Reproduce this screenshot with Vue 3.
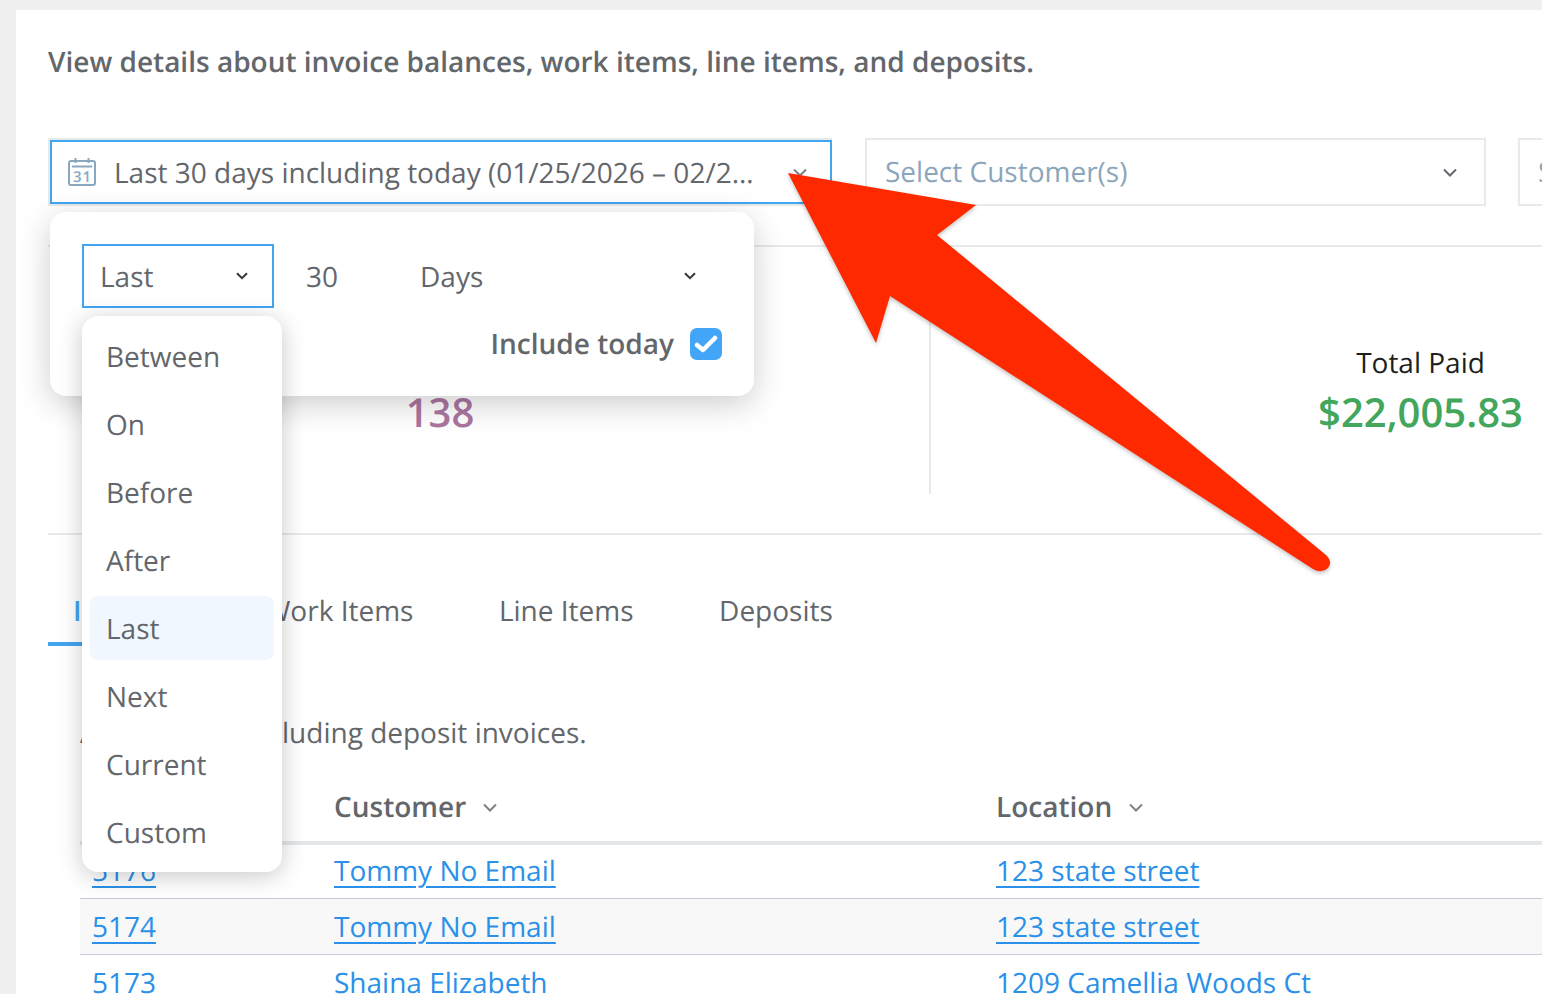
<script setup>
const menuItems = ['Between', 'On', 'Before', 'After', 'Last', 'Next', 'Current', 'Custom']
const tabs = ['Invoices', 'Work Items', 'Line Items', 'Deposits']
const rows = [
  { id: '5176', customer: 'Tommy No Email', location: '123 state street' },
  { id: '5174', customer: 'Tommy No Email', location: '123 state street' },
  { id: '5173', customer: 'Shaina Elizabeth', location: '1209 Camellia Woods Ct' },
]
</script>

<template>
  <div class="page">
    <main class="card">
      <p class="intro">View details about invoice balances, work items, line items, and deposits.</p>

      <div class="filters">
        <div class="field field-date">
          <svg class="cal" width="28" height="28" viewBox="0 0 28 28" fill="none" stroke="#8aa7c0" stroke-width="2">
            <rect x="1" y="3" width="26" height="24" rx="2" />
            <path d="M4 8.5H24M7.5 0V5M20.5 0V5" />
            <text class="cal-num" x="14.5" y="23.5" text-anchor="middle">31</text>
          </svg>
          <span class="date-text">Last 30 days including today (01/25/2026 – 02/23/2026)</span>
          <svg class="chev" width="14" height="9" viewBox="0 0 14 9" fill="none" stroke="#7d8185" stroke-width="2"><path d="M1 1.5L7 7.5L13 1.5" /></svg>
        </div>
        <div class="field field-customer">
          <span class="placeholder">Select Customer(s)</span>
          <svg class="chev" width="14" height="9" viewBox="0 0 14 9" fill="none" stroke="#63676b" stroke-width="2"><path d="M1 1.5L7 7.5L13 1.5" /></svg>
        </div>
        <div class="field field-third">
          <span class="placeholder">Select</span>
        </div>
      </div>

      <section class="stats">
        <div class="stat stat-first">
          <div class="stat-label">Total Invoices</div>
          <div class="stat-value purple">138</div>
        </div>
        <div class="stat stat-second">
          <div class="stat-label">Total Paid</div>
          <div class="stat-value green">$22,005.83</div>
        </div>
      </section>

      <nav class="tabs">
        <div v-for="(tab, i) in tabs" :key="tab" class="tab" :class="{ active: i === 0 }">{{ tab }}</div>
      </nav>

      <p class="desc">All invoices, excluding deposit invoices.</p>

      <div class="table">
        <div class="thead">
          <div class="th th-first">Invoice #</div>
          <div class="th">Customer
            <svg width="14" height="9" viewBox="0 0 14 9" fill="none" stroke="#7d8185" stroke-width="2"><path d="M1 1.5L7 7.5L13 1.5" /></svg>
          </div>
          <div class="th">Location
            <svg width="14" height="9" viewBox="0 0 14 9" fill="none" stroke="#7d8185" stroke-width="2"><path d="M1 1.5L7 7.5L13 1.5" /></svg>
          </div>
        </div>
        <div v-for="(row, i) in rows" :key="row.id" class="tr" :class="{ 'tr-first': i === 0, 'tr-alt': i === 1 }">
          <div class="td td-first"><a class="link">{{ row.id }}</a></div>
          <div class="td"><a class="link">{{ row.customer }}</a></div>
          <div class="td"><a class="link">{{ row.location }}</a></div>
        </div>
      </div>
    </main>

    <div class="popover">
      <div class="pop-row">
        <div class="pop-select">
          <span class="pop-text">Last</span>
          <svg width="12" height="8" viewBox="0 0 12 8" fill="none" stroke="#33373b" stroke-width="2"><path d="M1 1.2L6 6.2L11 1.2" /></svg>
        </div>
        <span class="pop-num pop-text">30</span>
        <div class="pop-unit">
          <span class="pop-text">Days</span>
          <svg width="12" height="8" viewBox="0 0 12 8" fill="none" stroke="#33373b" stroke-width="2"><path d="M1 1.2L6 6.2L11 1.2" /></svg>
        </div>
      </div>
      <div class="pop-today">
        <span>Include today</span>
        <span class="check">
          <svg width="24" height="20" viewBox="0 0 24 20" fill="none" stroke="#fff" stroke-width="4.5" stroke-linecap="round" stroke-linejoin="round"><path d="M3 11L9 16L21 4" /></svg>
        </span>
      </div>
    </div>

    <ul class="menu">
      <li v-for="item in menuItems" :key="item" class="menu-item" :class="{ selected: item === 'Last' }">{{ item }}</li>
    </ul>

    <svg class="arrow" width="1542" height="994" viewBox="0 0 1542 994">
      <path d="M788 173L976 205L937 235L1326 555Q1333 562 1328 568Q1322 574 1313 569L890 296L876 343Z" fill="#ff2900" />
    </svg>
  </div>
</template>

<style>
html, body { margin: 0; background: #eff0f1; }
</style>

<style scoped>
.page {
  position: relative;
  width: 1542px;
  height: 994px;
  overflow: hidden;
  padding: 10px 0 0 16px;
  box-sizing: border-box;
  background: #f0f0f1;
  font-family: "Open Sans", sans-serif;
  font-size: 28px;
  color: #63676b;
  text-rendering: geometricPrecision;
}
.card {
  width: 1526px;
  height: 984px;
  box-sizing: border-box;
  padding: 32px 0 0 32px;
  background: #fff;
  overflow: hidden;
}
.intro {
  margin: 0;
  line-height: 40px;
  font-weight: 600;
  white-space: nowrap;
}
.filters {
  display: flex;
  gap: 33px;
  margin-top: 56px;
  width: 1600px;
}
.field {
  height: 68px;
  box-sizing: border-box;
  border: 2px solid #e6eaea;
  display: flex;
  align-items: center;
  flex-shrink: 0;
}
.field-date {
  width: 784px;
  padding: 0 25px 0 18px;
  box-shadow: inset 0 0 0 2px #42a5f0;
  border-right-width: 0;
}
.cal { flex-shrink: 0; }
.cal-num {
  font-family: "Open Sans", sans-serif;
  font-size: 15px;
  font-weight: 600;
  letter-spacing: 1px;
  fill: #8aa7c0;
  stroke: none;
}
.date-text {
  flex: 1;
  margin-left: 18px;
  padding-top: 2px;
  min-width: 0;
  white-space: nowrap;
  overflow: hidden;
  text-overflow: ellipsis;
}
.chev { flex-shrink: 0; margin-left: 38px; }
.field-customer {
  width: 621px;
  padding: 0 27px 0 18px;
  justify-content: space-between;
}
.field-third {
  width: 120px;
  margin-left: -1px;
  padding-left: 18px;
}
.placeholder { color: #8ba6bb; white-space: nowrap; }
.stats {
  display: flex;
  width: 1862px;
  margin-top: 39px;
  height: 290px;
  box-sizing: border-box;
  border-top: 2px solid #e6eaea;
  border-bottom: 2px solid #e6eaea;
}
.stat {
  height: 247px;
  box-sizing: border-box;
  padding-top: 97px;
  text-align: center;
  flex-shrink: 0;
}
.stat-first { width: 881px; padding-right: 97px; }
.stat-second { width: 981px; border-left: 2px solid #e6eaea; }
.stat-label {
  line-height: 38px;
  color: #1d1f21;
}
.stat-value {
  line-height: 60px;
  font-size: 40px;
  font-weight: 600;
}
.purple { color: #ab76a1; }
.green { color: #43a65d; }
.tabs {
  display: flex;
  gap: 35.5px;
  margin-top: 43px;
}
.tab {
  height: 68px;
  box-sizing: border-box;
  padding: 13px 25px 0;
  line-height: 40px;
  white-space: nowrap;
  flex-shrink: 0;
}
.tab.active {
  width: 156px;
  color: #42a5f0;
  font-weight: 600;
  border-bottom: 4px solid #42a5f0;
}
.desc {
  margin: 67px 0 0 32px;
  line-height: 40px;
  white-space: nowrap;
}
.table {
  margin: 20px 0 0 32px;
  width: 1600px;
}
.thead, .tr {
  display: grid;
  grid-template-columns: 254px 662px 1fr;
}
.thead {
  height: 72px;
  box-sizing: border-box;
  border-bottom: 4px solid #e3e7ea;
}
.th {
  display: flex;
  align-items: center;
  gap: 17px;
  font-weight: 600;
  white-space: nowrap;
}
.th-first { padding-left: 12px; }
.tr {
  height: 56px;
  box-sizing: border-box;
  border-bottom: 1px solid #c9c9dc;
  align-items: center;
}
.tr-first { height: 54px; padding-bottom: 1px; }
.tr-alt { background: #f8f8f8; }
.td { white-space: nowrap; line-height: 40px; }
.td-first { padding-left: 12px; }
.link {
  color: #2b90e8;
  text-decoration: underline;
  text-decoration-thickness: 2px;
  text-underline-offset: 5px;
}
.popover {
  position: absolute;
  left: 50px;
  top: 212px;
  width: 704px;
  height: 184px;
  box-sizing: border-box;
  padding: 32px 32px 0;
  background: #fff;
  border-radius: 16px;
  box-shadow: 0 8px 32px rgba(0, 0, 0, 0.2);
}
.pop-row {
  display: flex;
  align-items: center;
}
.pop-text { padding-top: 2px; }
.pop-select {
  width: 192px;
  height: 64px;
  box-sizing: border-box;
  border: 2px solid #42a5f0;
  padding: 0 24px 0 16px;
  display: flex;
  align-items: center;
  justify-content: space-between;
}
.pop-num { margin-left: 32px; }
.pop-unit {
  margin-left: 82px;
  width: 276px;
  display: flex;
  align-items: center;
  justify-content: space-between;
}
.pop-today {
  display: flex;
  align-items: center;
  justify-content: flex-end;
  gap: 16px;
  margin-top: 17px;
  font-weight: 600;
}
.check {
  width: 32px;
  height: 32px;
  border-radius: 7px;
  background: #42a5f8;
  display: flex;
  align-items: center;
  justify-content: center;
}
.menu {
  position: absolute;
  left: 82px;
  top: 316px;
  width: 200px;
  height: 556px;
  box-sizing: border-box;
  margin: 0;
  padding: 8px;
  list-style: none;
  background: #fff;
  border-radius: 16px;
  box-shadow: 0 4px 24px rgba(0, 0, 0, 0.22);
  display: flex;
  flex-direction: column;
  gap: 4px;
}
.menu-item {
  width: 184px;
  height: 64px;
  flex-shrink: 0;
  box-sizing: border-box;
  padding-left: 16px;
  line-height: 66px;
  border-radius: 8px;
}
.menu-item.selected { background: #f0f7fe; }
.arrow {
  position: absolute;
  left: 0;
  top: 0;
  filter: drop-shadow(0 2px 2px rgba(0, 0, 0, 0.25));
}
</style>
